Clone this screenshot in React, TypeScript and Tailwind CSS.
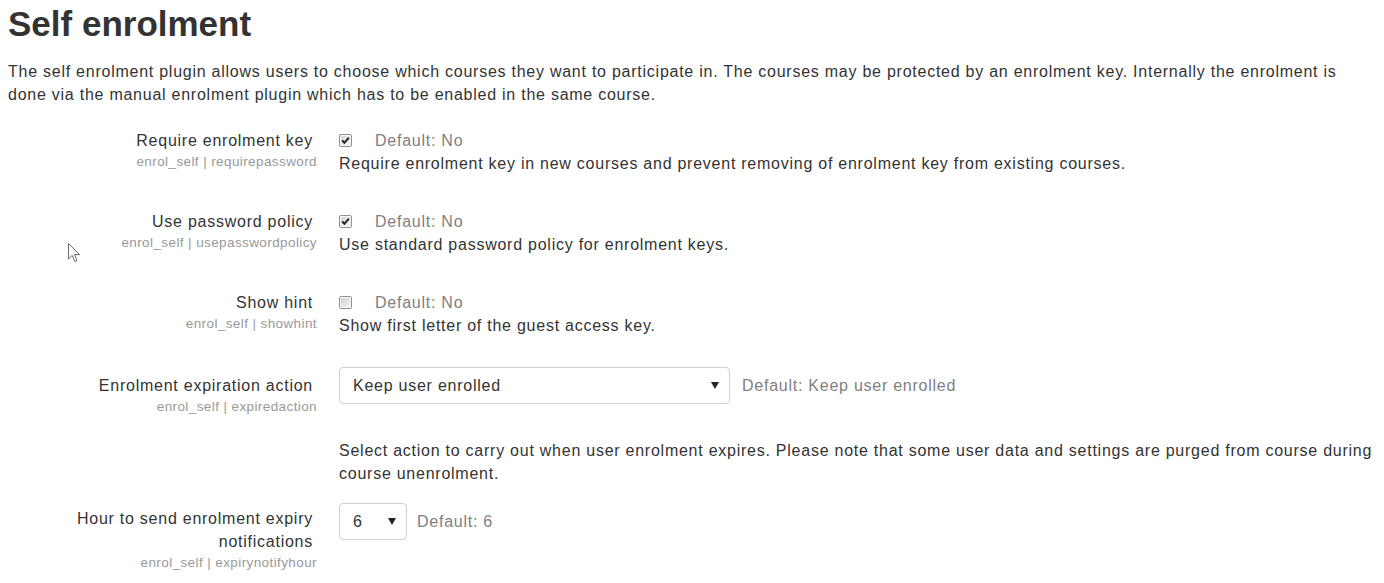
import type { ReactNode } from 'react';

const font = { fontFamily: '"Liberation Sans", Arial, sans-serif' };

function Checkbox({ checked }: { checked: boolean }) {
  return (
    <svg width="13" height="13" viewBox="0 0 13 13" className="shrink-0">
      <defs>
        <linearGradient id={checked ? 'cb-on' : 'cb-off'} x1="0" y1="0" x2="1" y2="1">
          <stop offset="0" stopColor={checked ? '#d6d6d6' : '#cfcfcf'} />
          <stop offset="1" stopColor="#f4f4f4" />
        </linearGradient>
      </defs>
      <rect x="0.5" y="0.5" width="12" height="12" rx="1.5" fill="#fdfdfd" stroke="#8f8f8f" />
      <rect x="2" y="2" width="9" height="9" fill={`url(#${checked ? 'cb-on' : 'cb-off'})`} />
      {checked && <path d="M3.2 6.4 L5.4 8.9 L9.9 3.6" fill="none" stroke="#1f1f1f" strokeWidth="1.9" />}
    </svg>
  );
}

function Select({ value, width }: { value: string; width: string }) {
  return (
    <div className={`${width} flex h-[37px] shrink-0 items-center justify-between rounded-[4px] border border-[#cfcfcf] bg-white pl-[13px] pr-[10px] text-[#333]`}>
      <span>{value}</span>
      <svg width="8" height="7" viewBox="0 0 8 7">
        <path d="M0 0 L8 0 L4 7 Z" fill="#222" />
      </svg>
    </div>
  );
}

function Row({ label, name, className, children }: { label: ReactNode; name: string; className: string; children: ReactNode }) {
  return (
    <div className={`flex ${className}`}>
      <div className="w-[305px] shrink-0 text-right">
        <div className="text-[#333]">{label}</div>
        <div className="-mr-[4px] text-[13.5px] leading-[19px] tracking-[0.4px] text-[#999]">{name}</div>
      </div>
      <div className="ml-[26px] min-w-0 flex-1">{children}</div>
    </div>
  );
}

function CheckRow({ label, name, checked, desc, className }: { label: string; name: string; checked: boolean; desc: string; className: string }) {
  return (
    <Row label={label} name={name} className={className}>
      <div className="flex h-[23px] items-center">
        <Checkbox checked={checked} />
        <span className="ml-[23px] text-[#808080]">Default: No</span>
      </div>
      <div className="text-[#333]">{desc}</div>
    </Row>
  );
}

export default function App() {
  return (
    <div className="relative h-[583px] w-[1384px] overflow-hidden bg-white pl-[8px] text-[16px] leading-[23px] tracking-[0.75px]" style={font}>
      <h2 className="pt-[3px] text-[35px] font-bold leading-[42px] tracking-normal text-[#333]">Self enrolment</h2>
      <p className="mt-[15px] max-w-[1345px] text-[#333]">
        The self enrolment plugin allows users to choose which courses they want to participate in. The courses may be protected by an enrolment key. Internally the enrolment is done via the manual enrolment plugin which has to be enabled in the same course.
      </p>

      <CheckRow
        className="mt-[23px]"
        label="Require enrolment key"
        name="enrol_self | requirepassword"
        checked
        desc="Require enrolment key in new courses and prevent removing of enrolment key from existing courses."
      />
      <CheckRow
        className="mt-[35px]"
        label="Use password policy"
        name="enrol_self | usepasswordpolicy"
        checked
        desc="Use standard password policy for enrolment keys."
      />
      <CheckRow
        className="mt-[35px]"
        label="Show hint"
        name="enrol_self | showhint"
        checked={false}
        desc="Show first letter of the guest access key."
      />

      <Row className="mt-[30px]" label={<span className="block pt-[7px]">Enrolment expiration action</span>} name="enrol_self | expiredaction">
        <div className="flex items-center">
          <Select value="Keep user enrolled" width="w-[391px]" />
          <span className="ml-[12px] text-[#808080]">Default: Keep user enrolled</span>
        </div>
        <div className="mt-[35px] pr-[4px] text-[#333]">
          Select action to carry out when user enrolment expires. Please note that some user data and settings are purged from course during course unenrolment.
        </div>
      </Row>

      <Row
        className="mt-[18px]"
        label={<span className="block pt-[4px]">Hour to send enrolment expiry notifications</span>}
        name="enrol_self | expirynotifyhour"
      >
        <div className="flex items-center">
          <Select value="6" width="w-[68px]" />
          <span className="ml-[10px] text-[#808080]">Default: 6</span>
        </div>
      </Row>

      <svg className="absolute left-[68px] top-[243px]" width="13" height="20" viewBox="0 0 13 20">
        <path d="M0.5 0.5 L0.5 16 L4.2 12.4 L6.8 18.5 L9 17.5 L6.5 11.6 L11.5 11.6 Z" fill="#fff" stroke="#6b6b6b" strokeWidth="1" />
      </svg>
    </div>
  );
}
